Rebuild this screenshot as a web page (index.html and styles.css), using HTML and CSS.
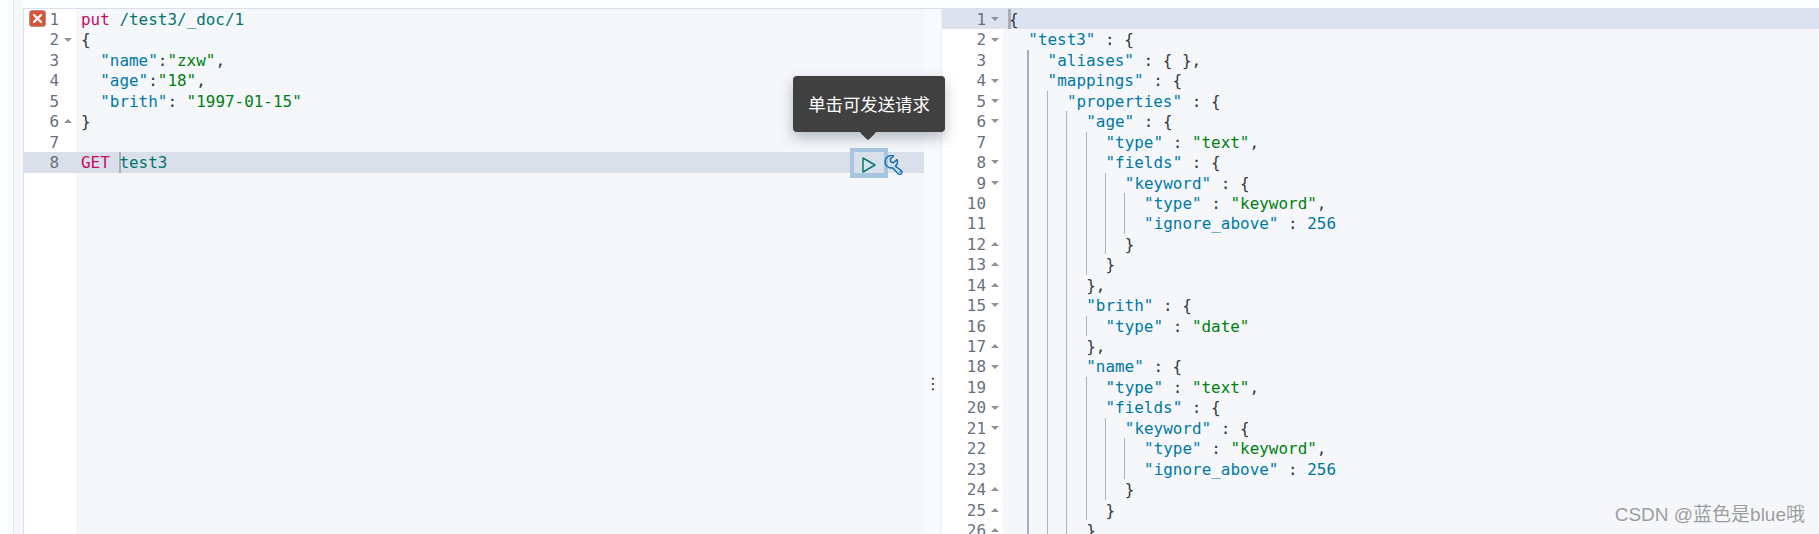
FILE: index.html
```html
<!DOCTYPE html>
<html lang="zh">
<head>
<meta charset="utf-8">
<title>Console</title>
<link rel="stylesheet" href="styles.css">
</head>
<body>
<div class="shell">
  <div class="rail"></div>
  <div class="editor">
    <section class="pane left">
      <div class="gutter">
        <div class="gl"><svg class="err" viewBox="0 0 17 17"><rect x="0.5" y="0.5" width="16" height="16" rx="2.5" fill="#de5234" stroke="#a5948c"/><path d="M5 5l7 7M12 5l-7 7" stroke="#fff" stroke-width="2.4" stroke-linecap="round"/></svg><span class="n">1</span><i class="f"></i></div>
        <div class="gl"><span class="n">2</span><i class="f d"></i></div>
        <div class="gl"><span class="n">3</span><i class="f"></i></div>
        <div class="gl"><span class="n">4</span><i class="f"></i></div>
        <div class="gl"><span class="n">5</span><i class="f"></i></div>
        <div class="gl"><span class="n">6</span><i class="f u"></i></div>
        <div class="gl"><span class="n">7</span><i class="f"></i></div>
        <div class="gl act"><span class="n">8</span><i class="f"></i></div>
      </div>
      <div class="code">
<div class="l"><span class="m">put</span> <span class="url">/test3/_doc/1</span></div>
<div class="l"><span class="p">{</span></div>
<div class="l">  <span class="k">"name"</span><span class="p">:</span><span class="s">"zxw"</span><span class="p">,</span></div>
<div class="l">  <span class="k">"age"</span><span class="p">:</span><span class="s">"18"</span><span class="p">,</span></div>
<div class="l">  <span class="k">"brith"</span><span class="p">:</span> <span class="s">"1997-01-15"</span></div>
<div class="l"><span class="p">}</span></div>
<div class="l"> </div>
<div class="l act"><span class="m">GET</span> <span class="caret"></span><span class="url">test3</span></div>
      </div>
      <div class="actions">
        <button class="run" type="button"><svg viewBox="0 0 14 16" class="play"><path d="M1 1v14L13 8z" fill="none" stroke="#017d73" stroke-width="1.5" stroke-linejoin="round"/></svg></button>
        <svg viewBox="0 0 20 20" class="wrench"><path d="M9.5 .9 6.2 4.2 6.8 7 9.6 7.7 13 4.4A6 6 0 0 1 11.4 11.1L18 16.2A2.6 2.6 0 0 1 14.6 19.2L8.6 12.8A6.4 6.4 0 0 1 .9 6.6 6.4 6.4 0 0 1 9.5 .9Z" fill="none" stroke="#0f6cb2" stroke-width="1.4" stroke-linejoin="round"/><circle cx="16" cy="17" r="0.8" fill="#0f6cb2"/></svg>
      </div>
      <div class="tip">单击可发送请求</div>
    </section>
    <div class="handle"><span class="dots">⋮</span></div>
    <section class="pane right">
      <div class="gutter">
        <div class="gl act"><span class="n">1</span><i class="f d"></i></div>
        <div class="gl"><span class="n">2</span><i class="f d"></i></div>
        <div class="gl"><span class="n">3</span><i class="f"></i></div>
        <div class="gl"><span class="n">4</span><i class="f d"></i></div>
        <div class="gl"><span class="n">5</span><i class="f d"></i></div>
        <div class="gl"><span class="n">6</span><i class="f d"></i></div>
        <div class="gl"><span class="n">7</span><i class="f"></i></div>
        <div class="gl"><span class="n">8</span><i class="f d"></i></div>
        <div class="gl"><span class="n">9</span><i class="f d"></i></div>
        <div class="gl"><span class="n">10</span><i class="f"></i></div>
        <div class="gl"><span class="n">11</span><i class="f"></i></div>
        <div class="gl"><span class="n">12</span><i class="f u"></i></div>
        <div class="gl"><span class="n">13</span><i class="f u"></i></div>
        <div class="gl"><span class="n">14</span><i class="f u"></i></div>
        <div class="gl"><span class="n">15</span><i class="f d"></i></div>
        <div class="gl"><span class="n">16</span><i class="f"></i></div>
        <div class="gl"><span class="n">17</span><i class="f u"></i></div>
        <div class="gl"><span class="n">18</span><i class="f d"></i></div>
        <div class="gl"><span class="n">19</span><i class="f"></i></div>
        <div class="gl"><span class="n">20</span><i class="f d"></i></div>
        <div class="gl"><span class="n">21</span><i class="f d"></i></div>
        <div class="gl"><span class="n">22</span><i class="f"></i></div>
        <div class="gl"><span class="n">23</span><i class="f"></i></div>
        <div class="gl"><span class="n">24</span><i class="f u"></i></div>
        <div class="gl"><span class="n">25</span><i class="f u"></i></div>
        <div class="gl"><span class="n">26</span><i class="f u"></i></div>
      </div>
      <div class="code">
<div class="l act"><span class="caret"></span><span class="p">{</span></div>
<div class="l"><b class="i"></b><span class="k">"test3"</span> <span class="p">:</span> <span class="p">{</span></div>
<div class="l"><b class="i"></b><b class="g first"></b><span class="k">"aliases"</span> <span class="p">:</span> <span class="p">{ },</span></div>
<div class="l"><b class="i"></b><b class="g first"></b><span class="k">"mappings"</span> <span class="p">:</span> <span class="p">{</span></div>
<div class="l"><b class="i"></b><b class="g first"></b><b class="g"></b><span class="k">"properties"</span> <span class="p">:</span> <span class="p">{</span></div>
<div class="l"><b class="i"></b><b class="g first"></b><b class="g"></b><b class="g"></b><span class="k">"age"</span> <span class="p">:</span> <span class="p">{</span></div>
<div class="l"><b class="i"></b><b class="g first"></b><b class="g"></b><b class="g"></b><b class="g"></b><span class="k">"type"</span> <span class="p">:</span> <span class="s">"text"</span><span class="p">,</span></div>
<div class="l"><b class="i"></b><b class="g first"></b><b class="g"></b><b class="g"></b><b class="g"></b><span class="k">"fields"</span> <span class="p">:</span> <span class="p">{</span></div>
<div class="l"><b class="i"></b><b class="g first"></b><b class="g"></b><b class="g"></b><b class="g"></b><b class="g"></b><span class="k">"keyword"</span> <span class="p">:</span> <span class="p">{</span></div>
<div class="l"><b class="i"></b><b class="g first"></b><b class="g"></b><b class="g"></b><b class="g"></b><b class="g"></b><b class="g"></b><span class="k">"type"</span> <span class="p">:</span> <span class="s">"keyword"</span><span class="p">,</span></div>
<div class="l"><b class="i"></b><b class="g first"></b><b class="g"></b><b class="g"></b><b class="g"></b><b class="g"></b><b class="g"></b><span class="k">"ignore_above"</span> <span class="p">:</span> <span class="num">256</span></div>
<div class="l"><b class="i"></b><b class="g first"></b><b class="g"></b><b class="g"></b><b class="g"></b><b class="g"></b><span class="p">}</span></div>
<div class="l"><b class="i"></b><b class="g first"></b><b class="g"></b><b class="g"></b><b class="g"></b><span class="p">}</span></div>
<div class="l"><b class="i"></b><b class="g first"></b><b class="g"></b><b class="g"></b><span class="p">},</span></div>
<div class="l"><b class="i"></b><b class="g first"></b><b class="g"></b><b class="g"></b><span class="k">"brith"</span> <span class="p">:</span> <span class="p">{</span></div>
<div class="l"><b class="i"></b><b class="g first"></b><b class="g"></b><b class="g"></b><b class="g"></b><span class="k">"type"</span> <span class="p">:</span> <span class="s">"date"</span></div>
<div class="l"><b class="i"></b><b class="g first"></b><b class="g"></b><b class="g"></b><span class="p">},</span></div>
<div class="l"><b class="i"></b><b class="g first"></b><b class="g"></b><b class="g"></b><span class="k">"name"</span> <span class="p">:</span> <span class="p">{</span></div>
<div class="l"><b class="i"></b><b class="g first"></b><b class="g"></b><b class="g"></b><b class="g"></b><span class="k">"type"</span> <span class="p">:</span> <span class="s">"text"</span><span class="p">,</span></div>
<div class="l"><b class="i"></b><b class="g first"></b><b class="g"></b><b class="g"></b><b class="g"></b><span class="k">"fields"</span> <span class="p">:</span> <span class="p">{</span></div>
<div class="l"><b class="i"></b><b class="g first"></b><b class="g"></b><b class="g"></b><b class="g"></b><b class="g"></b><span class="k">"keyword"</span> <span class="p">:</span> <span class="p">{</span></div>
<div class="l"><b class="i"></b><b class="g first"></b><b class="g"></b><b class="g"></b><b class="g"></b><b class="g"></b><b class="g"></b><span class="k">"type"</span> <span class="p">:</span> <span class="s">"keyword"</span><span class="p">,</span></div>
<div class="l"><b class="i"></b><b class="g first"></b><b class="g"></b><b class="g"></b><b class="g"></b><b class="g"></b><b class="g"></b><span class="k">"ignore_above"</span> <span class="p">:</span> <span class="num">256</span></div>
<div class="l"><b class="i"></b><b class="g first"></b><b class="g"></b><b class="g"></b><b class="g"></b><b class="g"></b><span class="p">}</span></div>
<div class="l"><b class="i"></b><b class="g first"></b><b class="g"></b><b class="g"></b><b class="g"></b><span class="p">}</span></div>
<div class="l"><b class="i"></b><b class="g first"></b><b class="g"></b><b class="g"></b><span class="p">}</span></div>
      </div>
    </section>
  </div>
</div>
<div class="mark">CSDN @蓝色是blue哦</div>
</body>
</html>
```
FILE: styles.css
```css
html, body {
  margin: 0;
  height: 100%;
  overflow: hidden;
  background: #fcfdfe;
}
.shell {
  display: flex;
  height: 534px;
  padding: 8px 0 0 13px;
  box-sizing: border-box;
  overflow: hidden;
}
.rail {
  flex: 0 0 10px;
  background: #f6f7fb;
  border-left: 1px solid #e3e6ed;
  box-sizing: border-box;
  margin-top: -8px;
}
.editor {
  flex: 1;
  display: flex;
  min-width: 0;
  border-top: 1px solid #d8dfea;
  border-left: 1px solid #dfe3ee;
}
.pane {
  display: flex;
  position: relative;
  font: 15.95px/22.45px "DejaVu Sans Mono", "Liberation Mono", monospace;
  color: #343741;
}
.pane.left { flex: 0 0 900px; z-index: 1; }
.pane.right { flex: 1; min-width: 0; }
.gutter {
  background: #fff;
  color: #69707d;
  flex: none;
}
.left .gutter { width: 52px; }
.right .gutter { width: 61px; }
.gl {
  display: flex;
  position: relative;
  justify-content: flex-end;
  align-items: flex-start;
  height: 20.45px;
}
.f {
  flex: 0 0 17px;
  height: 0;
  margin-top: 10.2px;
  position: relative;
}
.f.d::after, .f.u::after {
  content: "";
  position: absolute;
  left: 5px;
  top: -2px;
  border-left: 4px solid transparent;
  border-right: 4px solid transparent;
}
.f.d::after { border-top: 4px solid #8b929e; }
.f.u::after { border-bottom: 4px solid #8b929e; }
.err {
  position: absolute;
  left: 5px;
  top: 1px;
  width: 17px;
  height: 17px;
}
.code {
  flex: 1;
  min-width: 0;
  background: #f5f7fb;
}
.l {
  height: 20.45px;
  padding-left: 5px;
  white-space: pre;
}
.right .l { padding-left: 6px; }
.act { background: #d9e0ea; }
.right .act { background: #dde3ee; }
.i, .g {
  display: inline-block;
  vertical-align: top;
  width: 19.3px;
  box-sizing: border-box;
  height: 20.45px;
}
.g { border-left: 1px solid #a9b1c4; margin-left: -0.6px; margin-right: 0.6px; }
.g.first { border-left: 2px solid #a5adc0; margin-left: -1.6px; margin-right: 1.6px; }
.caret {
  display: inline-block;
  vertical-align: top;
  width: 2px;
  height: 20.45px;
  margin-right: -2px;
  background: #a8afba;
}
.right .caret { margin-left: -1px; width: 3px; margin-right: -2px; }
.m { color: #c80a68; }
.url { color: #00756c; }
.k { color: #0079a5; }
.s { color: #00800f; }
.num { color: #00759c; }
.p { color: #343741; }
.actions {
  position: absolute;
  left: 826px;
  top: 139px;
  display: flex;
  align-items: center;
}
.run {
  width: 38px;
  height: 30px;
  padding: 0;
  box-sizing: border-box;
  border: 4px solid #a7c6df;
  border-bottom-width: 5px;
  background: #d9e0ea;
  display: flex;
  align-items: center;
  justify-content: center;
}
.play { flex: none; width: 14px; height: 16px; margin-top: 4px; }
.wrench { width: 20px; height: 20px; margin: 4px 0 0 -4px; }
.tip {
  position: absolute;
  left: 769px;
  top: 67px;
  width: 152px;
  height: 56px;
  box-sizing: border-box;
  background: #404040;
  color: #fff;
  border-radius: 4px;
  font: 17.4px/56px "Noto Sans CJK SC", sans-serif;
  text-align: center;
  box-shadow: 0 6px 14px rgba(60, 70, 90, 0.35);
}
.tip::after {
  content: "";
  position: absolute;
  left: 69px;
  top: 50px;
  width: 12px;
  height: 12px;
  background: #404040;
  transform: rotate(45deg);
  border-radius: 2px;
}
.handle {
  flex: 0 0 18px;
  display: flex;
  justify-content: center;
  align-items: flex-start;
  background: #f9fafd;
  border-right: 1px solid #eceff5;
  box-sizing: border-box;
}
.dots {
  font: 16px/1 "DejaVu Sans", sans-serif;
  color: #343741;
  margin-top: 367px;
  margin-left: 1px;
}
.mark {
  position: absolute;
  right: 14px;
  bottom: 7px;
  font: 19px/24px "Liberation Sans", "Noto Sans CJK SC", sans-serif;
  color: rgba(120, 120, 120, 0.72);
}
```
